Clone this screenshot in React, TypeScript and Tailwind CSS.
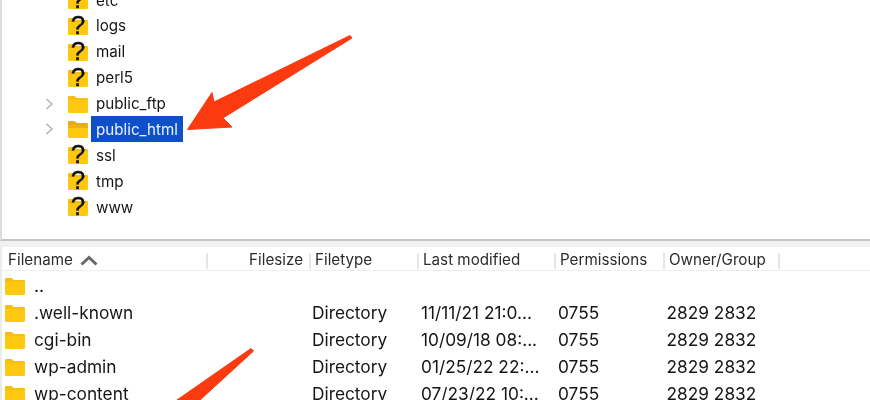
const FONT = "font-['Inter','Liberation_Sans',Arial,sans-serif]";

function Folder({ open }: { open?: boolean }) {
  return (
    <svg width="20" height="18" viewBox="0 0 20 18" className="shrink-0">
      <path d="M0 2.5a1.5 1.5 0 0 1 1.5-1.5h5l2 2h10a1.5 1.5 0 0 1 1.5 1.5v12a1.5 1.5 0 0 1-1.5 1.5h-17a1.5 1.5 0 0 1-1.5-1.5z" fill="#fdc80f" />
      <path d="M0 2.5a1.5 1.5 0 0 1 1.5-1.5h5l2 2h10a1.5 1.5 0 0 1 1.5 1.5v.5H0z" fill={open ? "#e8aa14" : "#f6bd12"} />
      {open && <path d="M0 5h20v3H0z" fill="#efb013" />}
    </svg>
  );
}

function UnknownFolder() {
  return (
    <div className="relative shrink-0 w-5 h-[18px]">
      <Folder />
      <span className="absolute left-0 top-[-7px] w-5 text-center font-['Liberation_Sans',Arial,sans-serif] text-[26px] leading-[30px] text-[#111] [-webkit-text-stroke:0.4px_#111]">?</span>
    </div>
  );
}

function Chevron() {
  return (
    <svg width="9" height="12" viewBox="0 0 9 12" className="shrink-0">
      <path d="M1.5 1l5.5 5-5.5 5" fill="none" stroke="#b5b5b5" strokeWidth="1.6" />
    </svg>
  );
}

const TREE = [
  { name: "etc", kind: "unknown" },
  { name: "logs", kind: "unknown" },
  { name: "mail", kind: "unknown" },
  { name: "perl5", kind: "unknown" },
  { name: "public_ftp", kind: "folder" },
  { name: "public_html", kind: "selected" },
  { name: "ssl", kind: "unknown" },
  { name: "tmp", kind: "unknown" },
  { name: "www", kind: "unknown" },
];

const FILES = [
  { name: "..", type: "", modified: "", perms: "", owner: "" },
  { name: ".well-known", type: "Directory", modified: "11/11/21 21:0...", perms: "0755", owner: "2829 2832" },
  { name: "cgi-bin", type: "Directory", modified: "10/09/18 08:...", perms: "0755", owner: "2829 2832" },
  { name: "wp-admin", type: "Directory", modified: "01/25/22 22:...", perms: "0755", owner: "2829 2832" },
  { name: "wp-content", type: "Directory", modified: "07/23/22 10:...", perms: "0755", owner: "2829 2832" },
];

function HeaderCell({ label, width, right }: { label?: string; width: string; right?: boolean }) {
  return (
    <div className={`${width} shrink-0 flex items-center h-4 border-r-2 border-[#e6e6e6] whitespace-nowrap ${right ? "justify-end pr-[6px]" : "pl-[4px]"}`}>
      {label}
    </div>
  );
}

export default function App() {
  return (
    <div className={`${FONT} relative w-[870px] h-[400px] overflow-hidden bg-white text-[#161616] blur-[0.4px]`}>
      {/* remote tree */}
      <div className="h-[241px] overflow-hidden border-l-2 border-b-2 border-l-[#dcdcdc] border-b-[#c4c4c4]">
        <div className="-mt-[13px] pl-[40px]">
          {TREE.map((row) => (
            <div key={row.name} className="h-[25.9px] flex items-center">
              <div className="w-[26px] shrink-0 pl-[3px]">{row.kind !== "unknown" && <Chevron />}</div>
              {row.kind === "unknown" ? <UnknownFolder /> : <Folder open={row.kind === "selected"} />}
              <span
                className={`ml-[3px] px-[5px] pt-[2px] h-[26px] flex items-center text-[15.2px] ${
                  row.kind === "selected" ? "bg-[#0f50c8] text-[#eaf1ff]" : ""
                }`}
              >
                {row.name}
              </span>
            </div>
          ))}
        </div>
      </div>

      {/* remote file list */}
      <div className="h-[159px] border-l-2 border-[#ececec]">
        <div className="h-[6px] bg-[#f1f1f1] -ml-[2px]" />
        <div className="h-[24px] pt-[4px] flex items-center border-b border-[#eeeeee] text-[15.2px] text-[#2c2c2c] pl-[2px]">
          <div className="w-[204px] shrink-0 flex items-center h-4 border-r-2 border-[#e6e6e6] pl-[4px]">
            Filename
            <svg width="18" height="11" viewBox="0 0 18 11" className="ml-[7px]">
              <path d="M1.5 9.5l7.5-7 7.5 7" fill="none" stroke="#666" strokeWidth="2.8" />
            </svg>
          </div>
          <HeaderCell label="Filesize" width="w-[103px]" right />
          <HeaderCell label="Filetype" width="w-[108px]" />
          <HeaderCell label="Last modified" width="w-[137px]" />
          <HeaderCell label="Permissions" width="w-[109px]" />
          <HeaderCell label="Owner/Group" width="w-[115px]" />
        </div>
        <div className="pl-[3px] text-[17.3px] pt-[1px]">
          {FILES.map((f) => (
            <div key={f.name} className="h-[27.2px] flex items-center">
              <Folder />
              <span className="w-[287px] shrink-0 pl-[9px]">{f.name}</span>
              <span className="w-[109px] shrink-0">{f.type}</span>
              <span className="w-[137px] shrink-0 whitespace-nowrap">{f.modified}</span>
              <span className="w-[108.5px] shrink-0">{f.perms}</span>
              <span className="whitespace-nowrap">{f.owner}</span>
            </div>
          ))}
        </div>
      </div>

      {/* annotation arrows */}
      <svg width="870" height="400" viewBox="0 0 870 400" className="absolute inset-0 pointer-events-none">
        <path d="M350 35.5 L352 38 L223 118 L232 127 L187.5 129.5 L212 92.5 L214 102 Z" fill="#fb3a10" stroke="#fb3a10" strokeLinejoin="round" />
        <path d="M251 348.5 L253.5 351 L200 400 L177 400 Z" fill="#fb3a10" stroke="#fb3a10" strokeLinejoin="round" />
      </svg>
    </div>
  );
}
